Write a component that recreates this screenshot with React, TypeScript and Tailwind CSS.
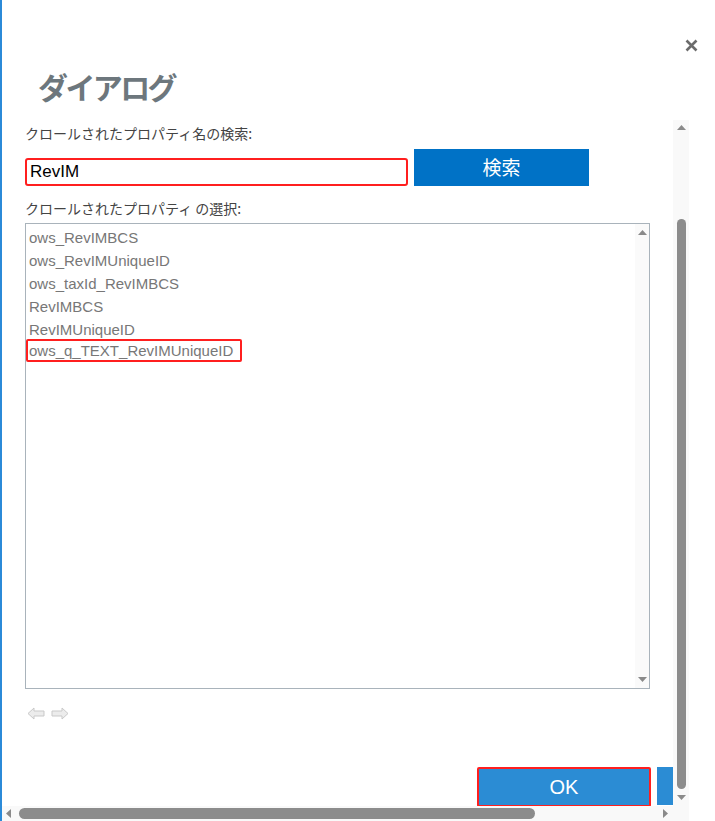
import React from 'react';

const jp = { fontFamily: '"Noto Sans CJK JP", "Noto Sans", sans-serif' };
const latin = { fontFamily: '"Liberation Sans", "Noto Sans CJK JP", sans-serif' };

const items = [
  'ows_RevIMBCS',
  'ows_RevIMUniqueID',
  'ows_taxId_RevIMBCS',
  'RevIMBCS',
  'RevIMUniqueID',
];

function TriUp({ className = '' }: { className?: string }) {
  return (
    <svg width="9" height="5" viewBox="0 0 9 5" className={className}>
      <polygon points="0,5 4.5,0 9,5" fill="#8a8a8a" />
    </svg>
  );
}

function TriDown({ className = '' }: { className?: string }) {
  return (
    <svg width="9" height="5" viewBox="0 0 9 5" className={className}>
      <polygon points="0,0 9,0 4.5,5" fill="#8a8a8a" />
    </svg>
  );
}

function TriLeft() {
  return (
    <svg width="5" height="9" viewBox="0 0 5 9">
      <polygon points="5,0 5,9 0,4.5" fill="#8a8a8a" />
    </svg>
  );
}

function TriRight() {
  return (
    <svg width="5" height="9" viewBox="0 0 5 9">
      <polygon points="0,0 5,4.5 0,9" fill="#8a8a8a" />
    </svg>
  );
}

function NavArrow({ dir }: { dir: 'left' | 'right' }) {
  const pts =
    dir === 'left'
      ? '1,6.5 7,1 7,4 17,4 17,9 7,9 7,12'
      : '17,6.5 11,1 11,4 1,4 1,9 11,9 11,12';
  return (
    <svg width="18" height="13" viewBox="0 0 18 13">
      <polygon points={pts} fill="#ececec" stroke="#c9c9c9" strokeWidth="1" strokeLinejoin="round" />
    </svg>
  );
}

export default function App() {
  return (
    <div className="flex h-[821px] w-[715px] flex-col overflow-hidden border-l-2 border-[#2b8ad8] bg-white">
      {/* header */}
      <div className="relative h-[120px] shrink-0">
        <button className="absolute left-[682px] top-[38px] flex h-[15px] w-[15px] items-center justify-center">
          <svg width="13" height="13" viewBox="0 0 13 13">
            <path d="M1.5 1.5 L11.5 11.5 M11.5 1.5 L1.5 11.5" stroke="#6b6b6b" strokeWidth="2.6" />
          </svg>
        </button>
        <h1
          className="pl-[36px] pt-[66px] text-[30px] font-bold leading-[40px] tracking-[-2.6px] text-[#6d777d]"
          style={jp}
        >
          ダイアログ
        </h1>
      </div>

      {/* body */}
      <div className="flex h-[686px] shrink-0">
        <div className="w-[671px] shrink-0 overflow-hidden pl-[23px]">
          <p className="mt-[2px] h-[22px] text-[14px] leading-[22px] text-[#444]" style={jp}>
            クロールされたプロパティ名の検索:
          </p>
          <div className="mt-[5px] flex items-end gap-[6px]">
            <div className="flex h-[28px] w-[383px] items-center rounded-[3px] border-2 border-[#ff1f1f] pl-[3px] text-[17px] text-black" style={latin}>
              RevIM
            </div>
            <button className="h-[37px] w-[175px] bg-[#0072c6] text-[19px] text-white" style={jp}>
              検索
            </button>
          </div>
          <p className="mt-[11px] h-[22px] text-[14px] leading-[22px] text-[#444]" style={jp}>
            クロールされたプロパティ の選択:
          </p>
          <div className="mt-[4px] flex h-[466px] w-[625px] border border-[#a9b3bb]">
            <ul className="flex-1 pl-px text-[15px] leading-[23px] text-[#777]" style={latin}>
              {items.map((item) => (
                <li key={item} className="h-[23px] border-2 border-transparent">
                  {item}
                </li>
              ))}
              <li className="-ml-px h-[23px] w-[216px] rounded-[2px] border-2 border-[#ff1f1f] pl-px leading-[19px]">
                ows_q_TEXT_RevIMUniqueID
              </li>
            </ul>
            <div className="flex w-[14px] flex-col items-center justify-between bg-[#fafafa] pb-[6px] pt-[6px]">
              <TriUp />
              <TriDown />
            </div>
          </div>
          <div className="mt-[18px] flex gap-[6px] pl-[2px]">
            <NavArrow dir="left" />
            <NavArrow dir="right" />
          </div>
          <div className="mt-[47px] flex gap-[6px] pl-[452px]">
            <button className="h-[40px] w-[174px] shrink-0 rounded-[2px] border-2 border-[#ff1f1f] bg-[#2b8cd4] text-[20px] text-white" style={latin}>
              OK
            </button>
            <button aria-label="キャンセル" className="h-[38px] w-[100px] shrink-0 bg-[#2b8cd4]" />
          </div>
        </div>
        {/* vertical scrollbar */}
        <div className="flex w-[16px] shrink-0 flex-col items-center bg-[#f9f9f9] pb-[6px] pt-[5px]">
          <TriUp />
          <div className="mt-[89px] w-[9px] flex-1 rounded-full bg-[#8c8c8c]" />
          <TriDown className="mt-[6px]" />
        </div>
      </div>

      {/* horizontal scrollbar */}
      <div className="flex h-[15px] w-[687px] shrink-0 items-center bg-[#f9f9f9] pl-[4px]">
        <TriLeft />
        <div className="ml-[8px] h-[11px] w-[516px] rounded-full bg-[#8c8c8c]" />
        <div className="ml-[128px]">
          <TriRight />
        </div>
      </div>
    </div>
  );
}
